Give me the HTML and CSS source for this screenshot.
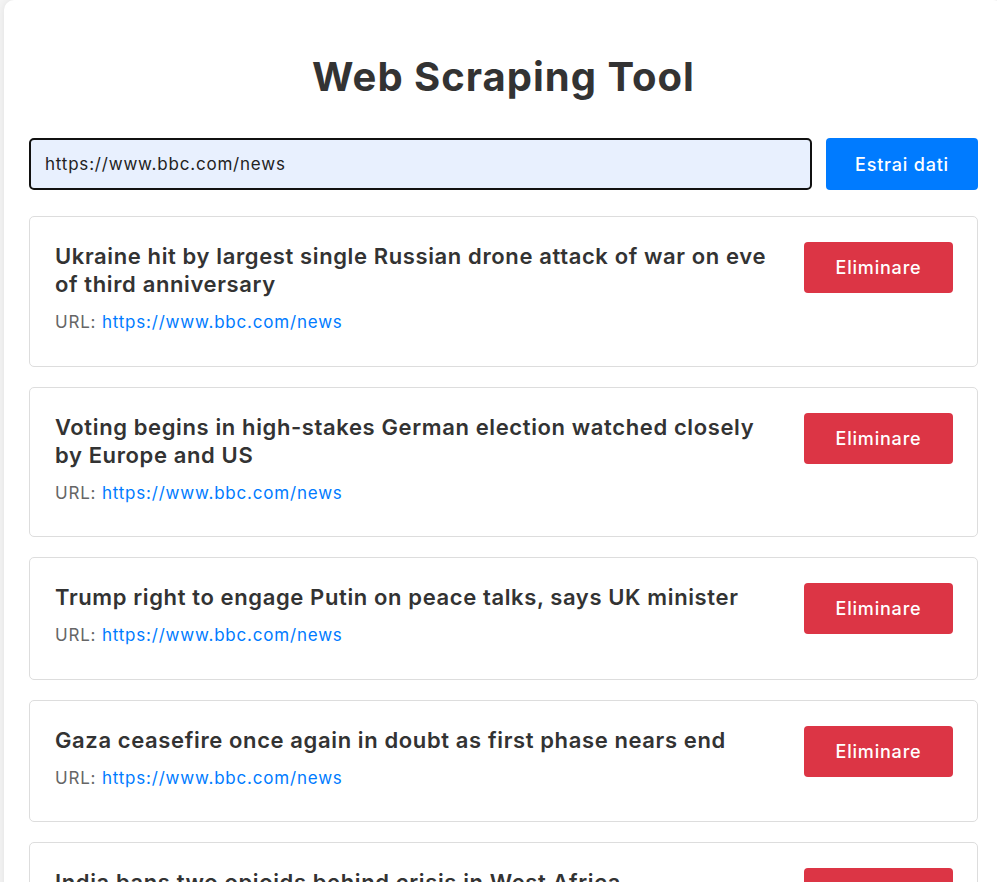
FILE: index.html
```html
<!DOCTYPE html>
<html lang="it">
<head>
<meta charset="utf-8">
<title>Web Scraping Tool</title>
<link rel="stylesheet" href="styles.css">
</head>
<body>
<div class="container">
  <h1 class="title">Web Scraping Tool</h1>
  <form class="search">
    <input class="url-input" type="text" value="https://www.bbc.com/news">
    <button class="btn btn-primary" type="button">Estrai dati</button>
  </form>
  <div class="results">
    <div class="card">
      <div class="card-body">
        <h3 class="card-title">Ukraine hit by largest single Russian drone attack of war on eve of third anniversary</h3>
        <p class="card-url">URL: <a href="#">https://www.bbc.com/news</a></p>
      </div>
      <button class="btn btn-danger" type="button">Eliminare</button>
    </div>
    <div class="card">
      <div class="card-body">
        <h3 class="card-title">Voting begins in high-stakes German election watched closely by Europe and US</h3>
        <p class="card-url">URL: <a href="#">https://www.bbc.com/news</a></p>
      </div>
      <button class="btn btn-danger" type="button">Eliminare</button>
    </div>
    <div class="card">
      <div class="card-body">
        <h3 class="card-title">Trump right to engage Putin on peace talks, says UK minister</h3>
        <p class="card-url">URL: <a href="#">https://www.bbc.com/news</a></p>
      </div>
      <button class="btn btn-danger" type="button">Eliminare</button>
    </div>
    <div class="card">
      <div class="card-body">
        <h3 class="card-title">Gaza ceasefire once again in doubt as first phase nears end</h3>
        <p class="card-url">URL: <a href="#">https://www.bbc.com/news</a></p>
      </div>
      <button class="btn btn-danger" type="button">Eliminare</button>
    </div>
    <div class="card">
      <div class="card-body">
        <h3 class="card-title">India bans two opioids behind crisis in West Africa</h3>
        <p class="card-url">URL: <a href="#">https://www.bbc.com/news</a></p>
      </div>
      <button class="btn btn-danger" type="button">Eliminare</button>
    </div>
  </div>
</div>
</body>
</html>
```
FILE: styles.css
```css
html, body {
  margin: 0;
  padding: 0;
}
body {
  background: #f4f4f4;
  font-family: Inter, "Open Sans", sans-serif;
  color: #333;
  overflow-x: hidden;
}
.container {
  box-sizing: border-box;
  width: 999px;
  margin-left: 4px;
  padding: 38px 25px 25px;
  background: #fff;
  border-radius: 10px;
  box-shadow: 0 0 8px rgba(0, 0, 0, 0.08);
}
.title {
  margin: 0 0 22px;
  text-align: center;
  font-size: 40px;
  line-height: 78px;
  font-weight: 700;
  letter-spacing: 1px;
  color: #333;
}
.search {
  display: flex;
  gap: 14px;
  margin-bottom: 26px;
}
.url-input {
  flex: 1;
  box-sizing: border-box;
  height: 52px;
  padding: 0 14px;
  font-family: inherit;
  font-size: 17px;
  font-weight: 400;
  letter-spacing: 0.8px;
  color: #222;
  background: #e8f0fe;
  border: 2px solid #111;
  border-radius: 5px;
  outline: none;
}
.btn {
  font-family: inherit;
  font-size: 18px;
  font-weight: 500;
  letter-spacing: 0.8px;
  color: #fff;
  border: none;
  border-radius: 4px;
  cursor: pointer;
}
.btn-primary {
  width: 152px;
  height: 52px;
  background: #007bff;
}
.results {
  display: flex;
  flex-direction: column;
  gap: 20px;
}
.card {
  display: flex;
  align-items: flex-start;
  gap: 20px;
  padding: 25px 24px 25px 25px;
  border: 1px solid #ddd;
  border-radius: 5px;
  background: #fff;
}
.card-body {
  flex: 1;
}
.card-title {
  margin: 0 0 12px;
  font-size: 22px;
  line-height: 28px;
  font-weight: 600;
  letter-spacing: 0.62px;
  color: #333;
}
.card-url {
  margin: 0 0 6.5px;
  font-size: 17px;
  line-height: 24px;
  letter-spacing: 0.8px;
  color: #666;
}
.card-url a {
  color: #007bff;
  text-decoration: none;
}
.btn-danger {
  flex: none;
  width: 149px;
  height: 51px;
  background: #dc3545;
}
```
